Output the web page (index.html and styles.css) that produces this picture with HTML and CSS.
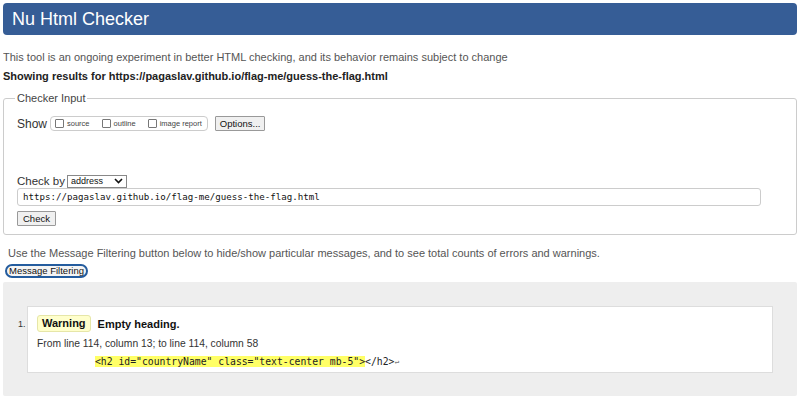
FILE: index.html
```html
<!DOCTYPE html>
<html>
<head>
<meta charset="utf-8">
<link rel="stylesheet" href="styles.css">
</head>
<body>
<h1 class="title">Nu Html Checker</h1>
<p class="intro">This tool is an ongoing experiment in better HTML checking, and its behavior remains subject to change</p>
<p class="results">Showing results for https://pagaslav.github.io/flag-me/guess-the-flag.html</p>
<fieldset class="inputs">
  <legend>Checker Input</legend>
  <div class="show-row">
    <span class="show-label">Show</span>
    <span class="opts">
      <label><span class="cb"></span>source</label>
      <label><span class="cb"></span>outline</label>
      <label><span class="cb"></span>image report</label>
    </span>
    <span class="btn">Options...</span>
  </div>
  <div class="checkby">Check by <span class="select">address<svg width="9" height="6" viewBox="0 0 9 6"><path d="M1 1l3.5 3.5L8 1" fill="none" stroke="#111" stroke-width="1.6"/></svg></span></div>
  <div class="url">https://pagaslav.github.io/flag-me/guess-the-flag.html</div>
  <span class="btn check">Check</span>
</fieldset>
<p class="filter-note">Use the Message Filtering button below to hide/show particular messages, and to see total counts of errors and warnings.</p>
<span class="filter-btn">Message Filtering</span>
<div class="results-area">
  <ol class="messages">
    <li class="msg">
      <div class="msg-head"><span class="badge">Warning</span><span class="msg-text">Empty heading.</span></div>
      <div class="loc">From line 114, column 13; to line 114, column 58</div>
      <div class="extract"><span class="hl">&lt;h2 id="countryName" class="text-center mb-5"&gt;</span>&lt;/h2&gt;<span class="ret">↩</span></div>
    </li>
  </ol>
</div>
</body>
</html>
```
FILE: styles.css
```css
body {
  margin: 3px 3px 0 3px;
  font-family: "Liberation Sans", Arial, sans-serif;
  background: #fff;
  color: #222;
}
.title {
  margin: 0;
  height: 32px;
  background: #365d96;
  color: #fff;
  border-radius: 4px;
  font-size: 18px;
  font-weight: normal;
  line-height: 33px;
  padding-left: 9px;
}
.intro {
  margin: 15px 0 0 0;
  font-size: 11px;
  color: #555;
  line-height: 14px;
}
.results {
  margin: 5px 0 0 0;
  font-size: 11px;
  font-weight: bold;
  color: #222;
  line-height: 14px;
}
.inputs {
  margin: 10px 0 0 0;
  border: 1px solid #ccc;
  border-radius: 3px;
  padding: 6px 13px 8px 13px;
  box-sizing: border-box;
  height: 142px;
}
.inputs legend {
  font-size: 11px;
  color: #444;
  padding: 0 2px;
  margin-left: -2px;
  line-height: 10px;
}
.show-row {
  display: flex;
  align-items: center;
  font-size: 12px;
  color: #333;
  margin-top: 7px;
}
.show-label {
  margin-right: 3px;
}
.opts {
  display: flex;
  align-items: center;
  border: 1px solid #ccc;
  border-radius: 4px;
  height: 13px;
  padding: 0 5px 0 4px;
  font-size: 7.5px;
  color: #444;
  margin-right: 7px;
}
.opts label {
  display: flex;
  align-items: center;
  margin-right: 12px;
}
.opts label:last-child {
  margin-right: 0;
}
.cb {
  display: inline-block;
  width: 7px;
  height: 7px;
  border: 1px solid #777;
  border-radius: 1px;
  margin-right: 3px;
  background: #fff;
}
.btn {
  display: inline-block;
  font-size: 9.5px;
  color: #111;
  background: #f0f0f0;
  border: 1px solid #999;
  border-radius: 1px;
  padding: 0 4px;
  line-height: 13px;
}
.checkby {
  margin-top: 43px;
  font-size: 11.5px;
  color: #333;
  display: flex;
  align-items: center;
  line-height: 14px;
}
.select {
  display: inline-flex;
  align-items: center;
  justify-content: space-between;
  margin-left: 2px;
  width: 52px;
  height: 11px;
  border: 1px solid #888;
  padding: 0 3px 0 3px;
  font-size: 9px;
  color: #111;
}
.url {
  margin-top: 0;
  width: 737px;
  height: 16px;
  border: 1px solid #ccc;
  border-radius: 3px;
  font-family: "DejaVu Sans Mono", "Liberation Mono", monospace;
  font-size: 9.15px;
  line-height: 16px;
  padding-left: 5px;
  color: #111;
}
.check {
  margin-top: 5px;
  padding: 0 5px;
}
.filter-note {
  margin: 11px 0 0 5px;
  font-size: 11px;
  color: #555;
  line-height: 14px;
}
.filter-btn {
  display: inline-block;
  margin: 3px 0 0 2px;
  font-size: 9.5px;
  color: #111;
  border: 2px solid #245c9e;
  border-radius: 7px;
  padding: 0 2px;
  line-height: 10px;
  background: #f4f4f4;
}
.results-area {
  margin-top: 4px;
  background: #eee;
  border-radius: 2px;
  height: 114px;
  padding: 24px 24px 0 24px;
  box-sizing: border-box;
}
.messages {
  margin: 0;
  padding: 0;
  list-style: none;
}
.msg {
  position: relative;
  background: #fff;
  border: 1px solid #ddd;
  padding: 8px 9px 0 9px;
  box-sizing: border-box;
  height: 67px;
}
.msg::before {
  content: "1.";
  position: absolute;
  left: -10px;
  top: 12px;
  font-size: 9px;
  color: #333;
}
.msg-head {
  display: flex;
  align-items: center;
}
.badge {
  background: #ffffcc;
  border: 1px solid #e6e6a8;
  border-radius: 3px;
  font-size: 11px;
  font-weight: bold;
  padding: 0 4px;
  line-height: 15px;
  color: #111;
}
.msg-text {
  margin-left: 7px;
  font-size: 11px;
  font-weight: bold;
  color: #111;
}
.loc {
  margin-top: 6px;
  font-size: 10.3px;
  color: #333;
  line-height: 12px;
}
.extract {
  margin-top: 5px;
  padding-left: 58px;
  font-family: "DejaVu Sans Mono", "Liberation Mono", monospace;
  font-size: 9.75px;
  color: #222;
  line-height: 13px;
}
.hl {
  background: #ffff66;
}
.ret {
  font-size: 8px;
  color: #777;
}
```
